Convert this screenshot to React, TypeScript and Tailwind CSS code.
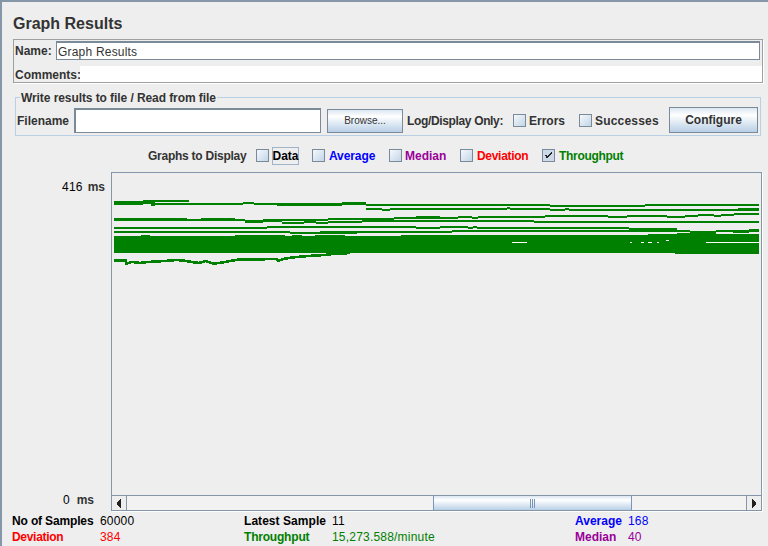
import React from "react";

type R = [number, number, number, number];
// bands measured in 3x crops: [x0, x1, y0, y1]
const leftBands: R[] = [
  [42,130,92,105],[130,267,90,96],[130,165,96,102],[152,165,102,108],[165,415,99,105],[415,430,99,105],[430,462,96,103],[462,530,99,105],[530,575,100,107],[575,725,99,107],[725,798,96,106],[798,1020,102,108],
  [798,845,114,120],[845,870,117,123],[870,885,114,120],[885,1020,114,120],
  [42,262,144,153],[262,303,147,153],[303,405,144,153],[405,435,147,153],[435,490,150,159],[490,546,147,156],[546,612,156,162],[546,612,147,153],[612,648,147,159],[648,684,156,162],[648,684,147,153],[684,786,153,159],[684,786,144,150],[786,882,144,156],[882,1020,150,156],[882,948,141,147],[948,1020,138,147],
  [42,500,171,177],[500,520,168,174],[520,948,168,174],[948,1020,171,177],
  [42,570,183,189],[570,580,186,192],[580,660,186,191],[660,770,184,192],[770,1020,183,189],
  [42,405,198,249],[405,555,195,249],[555,645,198,249],[576,606,195,198],[645,735,195,249],[735,945,198,249],[903,945,195,198],[945,1020,195,249],[124,150,195,198],
];
const rightBands: R[] = [
  [0,360,102,108],[360,645,105,111],[645,675,102,108],[675,987,102,108],
  [0,231,114,120],[231,240,111,117],[240,360,114,120],[360,405,117,123],[405,417,114,120],[417,987,117,123],[924,987,114,120],
  [0,15,138,144],[15,84,141,147],[84,126,138,144],[126,144,141,147],[144,345,138,144],[345,534,135,141],[534,590,138,144],[590,712,135,141],[712,765,138,144],[765,804,135,141],[804,852,132,138],[852,873,135,141],[873,912,132,138],[912,987,129,135],
  [0,312,150,156],[312,987,153,159],
  [0,30,171,177],[30,115,168,174],[115,130,171,177],[130,142,168,174],[142,597,171,177],[597,680,174,186],[680,740,174,186],
  [0,65,183,189],[65,597,180,186],[597,780,180,186],[780,858,183,192],[858,910,180,186],[910,957,180,189],[957,987,177,186],
  [0,987,195,249],[655,987,192,195],[740,780,189,192],[735,987,249,252],
];
const gaps: R[] = [
  [246,291,216,218],[600,606,216,218],[633,642,216,218],[655,665,216,218],[680,687,216,218],[708,717,210,213],[828,987,216,219],
];
const lowLine = "42,272 78,272 78,281 96,276 120,279 144,276 195,273 231,270 252,272 276,276 297,279 318,273 340,281 370,277 390,273 414,269 530,267 535,272 550,267 566,264 590,261 624,258 672,255 700,252 750,249";
const lowPoints = lowLine.split(" ").map((p) => {
  const [x, y] = p.split(",").map(Number);
  return `${100 + x / 3},${170 + y / 3}`;
}).join(" ");

function Bar({ r, ox, fill }: { r: R; ox: number; fill: string }) {
  const [a, b, c, d] = r;
  const x0 = Math.round(ox + a / 3);
  const x1 = Math.round(ox + b / 3);
  const y0 = Math.round(170 + c / 3);
  const y1 = Math.round(170 + d / 3);
  return <rect x={x0} y={y0} width={x1 - x0} height={y1 - y0} fill={fill} />;
}

function Bands() {
  return (
    <svg className="w-[649px] h-[322px] block" viewBox="112 173 649 322" shapeRendering="crispEdges">
      {leftBands.map((r, i) => <Bar key={`l${i}`} r={r} ox={100} fill="#008000" />)}
      {rightBands.map((r, i) => <Bar key={`r${i}`} r={r} ox={430} fill="#008000" />)}
      {gaps.map((r, i) => <Bar key={`g${i}`} r={r} ox={430} fill="#ffffff" />)}
      <polyline points={lowPoints} fill="none" stroke="#008000" strokeWidth="2.6" />
    </svg>
  );
}

function Check({ checked = false }: { checked?: boolean }) {
  return (
    <span className={`size-[13px] shrink-0 border border-[#7a8a99] flex items-center justify-center ${checked ? "bg-[#cbd9e8]" : "bg-gradient-to-br from-[#f4f8fc] to-[#c3d5e8]"}`}>
      {checked && (
        <svg width="11" height="11" viewBox="0 0 11 11" shapeRendering="crispEdges">
          <path d="M2 5h2v1h1v-1h1v-1h1v-1h1v-1h1v2h-1v1h-1v1h-1v1h-1v1h-2v-2h-1z" fill="#222" />
        </svg>
      )}
    </span>
  );
}

function Arrow({ dir }: { dir: "l" | "r" }) {
  return (
    <svg width="6" height="9" viewBox="0 0 6 9" shapeRendering="crispEdges">
      {dir === "l" ? <path d="M4 0h1v9h-1v-1h-1v-1h-1v-1h-1v-3h1v-1h1v-1h1z" fill="#222" /> : <path d="M1 0h1v1h1v1h1v1h1v3h-1v1h-1v1h-1v1h-1z" fill="#222" />}
    </svg>
  );
}

const btn = "border border-[#7a8a99] bg-gradient-to-b from-[#dce7f2] via-[#ffffff] via-30% to-[#b8cfe5] flex items-center justify-center text-[#333]";

export default function App() {
  return (
    <div className="relative w-[768px] h-[546px] overflow-hidden bg-[#eeeeee] border-t-2 border-l-2 border-[#8496a8] flex flex-col font-['Liberation_Sans',Arial,sans-serif] text-[12px] font-bold text-[#333]">
      <span className="absolute left-0 top-[-2px] w-[614px] h-px bg-[#a8a8a8]"></span>
      <div className="h-[37px] pl-[11px] pt-[13px] text-[16px] leading-[18px]">Graph Results</div>

      <div className="ml-[11px] w-[750px] h-[44px] border border-[#a0a0a0] shadow-[1px_1px_0_#ffffff] flex flex-col">
        <div className="flex h-[20px] mt-px items-center">
          <span className="w-[42px] pl-[1px] pt-[1px]">Name:</span>
          <div className="w-[704px] h-[19px] bg-white border-t-2 border-l border-b border-r border-[#7a8a99] flex items-center pl-[1px] pt-[1px] font-normal tracking-[0.2px] text-[#333]">Graph Results</div>
        </div>
        <div className="flex mt-[5px] h-[17px] items-center">
          <span className="w-[66px] pl-[1px] pt-[2px]">Comments:</span>
          <div className="flex-1 h-[16px] bg-white"></div>
        </div>
      </div>

      <div className="relative ml-[13px] mt-[14px] w-[746px] h-[39px] border border-[#b8cfe5] flex items-center pl-[1px] pt-[7px]">
        <span className="absolute left-[4px] top-[-7px] bg-[#eeeeee] px-px leading-[14px] tracking-[-0.08px]">Write results to file / Read from file</span>
        <span className="w-[57px] mt-[2px]">Filename</span>
        <div className="w-[247px] h-[25px] bg-white border-t-2 border-l-2 border-b border-r border-[#7a8a99]"></div>
        <div className={`${btn} ml-[6px] w-[76px] h-[24px] mt-px font-normal text-[10px]`}>Browse...</div>
        <span className="ml-[4px] w-[106px] mt-[2px] tracking-[-0.35px]">Log/Display Only:</span>
        <span className="mt-px"><Check /></span>
        <span className="ml-[3px] w-[50px] mt-[2px]">Errors</span>
        <span className="mt-px"><Check /></span>
        <span className="ml-[3px] w-[74px] mt-[2px] tracking-[0.2px]">Successes</span>
        <div className={`${btn} w-[89px] h-[26px]`}>Configure</div>
      </div>

      <div className="h-[36px] pl-[146px] pt-[3px] flex items-center">
        <span className="w-[108px] tracking-[-0.25px]">Graphs to Display</span>
        <Check />
        <span className="ml-[3px] w-[27px] h-[18px] border border-[#9fb4c9] text-black flex items-center justify-center">Data</span>
        <span className="w-[13px]"></span>
        <Check />
        <span className="ml-[4px] w-[60px] text-[#0000ff] tracking-[-0.1px]">Average</span>
        <Check />
        <span className="ml-[3px] w-[55px] text-[#990099]">Median</span>
        <Check />
        <span className="ml-[4px] w-[65px] text-[#ff0000] tracking-[-0.3px]">Deviation</span>
        <Check checked />
        <span className="ml-[4px] text-[#008000] tracking-[-0.3px]">Throughput</span>
      </div>

      <div className="flex h-[340px]">
        <div className="w-[109px] pt-[6px] pb-[3px] flex flex-col justify-between items-end">
          <span className="mr-[6px]"><span className="font-normal text-black tracking-[0.2px]">416</span><span className="ml-[5px]">ms</span></span>
          <span className="mr-[17px]"><span className="font-normal text-black">0</span><span className="ml-[7px]">ms</span></span>
        </div>
        <div className="w-[651px] h-[339px] border border-[#8496a8] shadow-[1px_1px_0_#ffffff] flex flex-col">
          <Bands />
          <div className="h-[15px] border-t border-[#8496a8] flex">
            <div className="w-[15px] border-r border-[#8496a8] flex items-center justify-center"><Arrow dir="l" /></div>
            <div className="w-[306px] bg-[#f2f2f2]"></div>
            <div className="w-[199px] bg-gradient-to-b from-[#dce7f2] via-[#ffffff] via-30% to-[#b8cfe5] border-l border-r border-[#7a95b8] flex items-center justify-center gap-px">
              <span className="w-px h-[9px] bg-[#7a95b8]"></span>
              <span className="w-px h-[9px] bg-[#7a95b8]"></span>
              <span className="w-px h-[9px] bg-[#7a95b8]"></span>
            </div>
            <div className="flex-1 bg-[#f2f2f2]"></div>
            <div className="w-[15px] border-l border-[#8496a8] flex items-center justify-center"><Arrow dir="r" /></div>
          </div>
        </div>
      </div>

      <div className="pl-[10px] grid grid-cols-[88px_144px_88px_243px_53px_1fr] auto-rows-[16px] mt-px leading-[16px]">
        <span className="text-black tracking-[-0.15px]">No of Samples</span>
        <span className="font-normal text-black tracking-[0.2px]">60000</span>
        <span className="text-black tracking-[0.05px]">Latest Sample</span>
        <span className="font-normal text-black tracking-[0.2px]">11</span>
        <span className="text-[#0000ff]">Average</span>
        <span className="font-normal text-[#0000ff] tracking-[0.2px]">168</span>
        <span className="text-[#ff0000] tracking-[-0.3px]">Deviation</span>
        <span className="font-normal text-[#ff0000] tracking-[0.2px]">384</span>
        <span className="text-[#008000] tracking-[-0.2px]">Throughput</span>
        <span className="font-normal text-[#008000] tracking-[0.2px]">15,273.588/minute</span>
        <span className="text-[#990099]">Median</span>
        <span className="font-normal text-[#990099] tracking-[0.2px]">40</span>
      </div>
    </div>
  );
}
